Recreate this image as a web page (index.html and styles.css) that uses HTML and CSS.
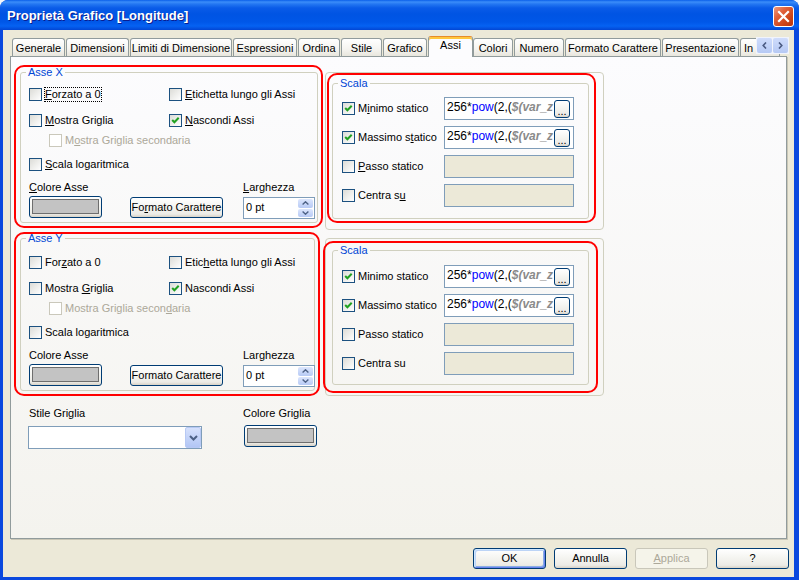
FILE: index.html
```html
<!DOCTYPE html>
<html lang="it">
<head>
<meta charset="utf-8">
<title>Proprietà Grafico [Longitude]</title>
<link rel="stylesheet" href="styles.css">
</head>
<body>
<div class="window">
  <div class="titlebar">
    <span class="title">Proprietà Grafico [Longitude]</span>
    <button class="close" aria-label="Chiudi"><svg width="13" height="13" viewBox="0 0 13 13"><path d="M2 2 L11 11 M11 2 L2 11" fill="none" stroke="#fff" stroke-width="2.2" stroke-linecap="square"/></svg></button>
  </div>
  <div class="frame">
    <div class="tabstrip">
      <div class="tab t1">Generale</div>
      <div class="tab t2">Dimensioni</div>
      <div class="tab t3">Limiti di Dimensione</div>
      <div class="tab t4">Espressioni</div>
      <div class="tab t5">Ordina</div>
      <div class="tab t6">Stile</div>
      <div class="tab t7">Grafico</div>
      <div class="tab sel t8">Assi</div>
      <div class="tab t9">Colori</div>
      <div class="tab t10">Numero</div>
      <div class="tab t11">Formato Carattere</div>
      <div class="tab t12">Presentazione</div>
      <div class="tab t13">In</div>
      <div class="tabscroll">
        <span class="sc"><svg width="5" height="7" viewBox="0 0 5 7"><path d="M4 0.5 L1.2 3.5 L4 6.5" fill="none" stroke="#4A5A82" stroke-width="1.6"/></svg></span>
        <span class="sc"><svg width="5" height="7" viewBox="0 0 5 7"><path d="M1 0.5 L3.8 3.5 L1 6.5" fill="none" stroke="#4A5A82" stroke-width="1.6"/></svg></span>
      </div>
    </div>

    <div class="panel">
      <div class="row row-a">
        <div class="mark mark-x">
          <fieldset class="group">
            <legend>Asse X</legend>
            <div class="axis">
              <div class="cbrow">
                <div class="chk"><span class="box"></span><span class="lbl focus"><u>F</u>orzato a 0</span></div>
                <div class="chk"><span class="box"></span><span class="lbl"><u>E</u>tichetta lungo gli Assi</span></div>
              </div>
              <div class="cbrow r2">
                <div class="chk"><span class="box"></span><span class="lbl"><u>M</u>ostra Griglia</span></div>
                <div class="chk"><span class="box"><svg width="11" height="11" viewBox="0 0 11 11"><path d="M2.2 5 L4.4 7.3 L8.7 2.8" fill="none" stroke="#21A121" stroke-width="2"/></svg></span><span class="lbl"><u>N</u>ascondi Assi</span></div>
              </div>
              <div class="cbrow r3">
                <div class="chk dis"><span class="box"></span><span class="lbl">M<u>o</u>stra Griglia secondaria</span></div>
              </div>
              <div class="cbrow r4">
                <div class="chk"><span class="box"></span><span class="lbl"><u>S</u>cala logaritmica</span></div>
              </div>
              <div class="ctrl">
                <span class="lab"><u>C</u>olore Asse</span>
                <span class="lab larg"><u>L</u>arghezza</span>
                <button class="btn colbtn"><span class="swatch"></span></button>
                <button class="btn fmt">Fo<u>r</u>mato Carattere</button>
                <div class="spin">
                  <span class="val">0 pt</span>
                  <span class="updown">
                    <span class="ud"><svg width="7" height="4" viewBox="0 0 7 4"><path d="M0.6 3.5 L3.5 0.8 L6.4 3.5" fill="none" stroke="#4D6185" stroke-width="1.4"/></svg></span>
                    <span class="ud"><svg width="7" height="4" viewBox="0 0 7 4"><path d="M0.6 0.5 L3.5 3.2 L6.4 0.5" fill="none" stroke="#4D6185" stroke-width="1.4"/></svg></span>
                  </span>
                </div>
              </div>
            </div>
          </fieldset>
        </div>

        <div class="outer outer-a">
          <div class="mark mark-sx">
            <fieldset class="group">
              <legend>Scala</legend>
              <div class="scala-in">
                <div class="srow">
                  <div class="chk"><span class="box"><svg width="11" height="11" viewBox="0 0 11 11"><path d="M2.2 5 L4.4 7.3 L8.7 2.8" fill="none" stroke="#21A121" stroke-width="2"/></svg></span><span class="lbl">M<u>i</u>nimo statico</span></div>
                  <div class="tb"><span class="expr">256*<span class="kw">pow</span>(2,(<span class="var">$(var_z</span></span><button class="btn dots">...</button></div>
                </div>
                <div class="srow">
                  <div class="chk"><span class="box"><svg width="11" height="11" viewBox="0 0 11 11"><path d="M2.2 5 L4.4 7.3 L8.7 2.8" fill="none" stroke="#21A121" stroke-width="2"/></svg></span><span class="lbl">Massimo s<u>t</u>atico</span></div>
                  <div class="tb"><span class="expr">256*<span class="kw">pow</span>(2,(<span class="var">$(var_z</span></span><button class="btn dots">...</button></div>
                </div>
                <div class="srow">
                  <div class="chk"><span class="box"></span><span class="lbl"><u>P</u>asso statico</span></div>
                  <div class="tb dis"></div>
                </div>
                <div class="srow">
                  <div class="chk"><span class="box"></span><span class="lbl">Centra s<u>u</u></span></div>
                  <div class="tb dis"></div>
                </div>
              </div>
            </fieldset>
          </div>
        </div>
      </div>

      <div class="row row-b">
        <div class="mark mark-y">
          <fieldset class="group">
            <legend>Asse Y</legend>
            <div class="axis">
              <div class="cbrow">
                <div class="chk"><span class="box"></span><span class="lbl">For<u>z</u>ato a 0</span></div>
                <div class="chk"><span class="box"></span><span class="lbl">Etic<u>h</u>etta lungo gli Assi</span></div>
              </div>
              <div class="cbrow r2">
                <div class="chk"><span class="box"></span><span class="lbl">Mostra <u>G</u>riglia</span></div>
                <div class="chk"><span class="box"><svg width="11" height="11" viewBox="0 0 11 11"><path d="M2.2 5 L4.4 7.3 L8.7 2.8" fill="none" stroke="#21A121" stroke-width="2"/></svg></span><span class="lbl">Nascondi Assi</span></div>
              </div>
              <div class="cbrow r3">
                <div class="chk dis"><span class="box"></span><span class="lbl">Mostra Griglia secon<u>d</u>aria</span></div>
              </div>
              <div class="cbrow r4">
                <div class="chk"><span class="box"></span><span class="lbl">Scala logaritmica</span></div>
              </div>
              <div class="ctrl">
                <span class="lab">Colore Asse</span>
                <span class="lab larg">Larghezza</span>
                <button class="btn colbtn"><span class="swatch"></span></button>
                <button class="btn fmt">Formato Carattere</button>
                <div class="spin">
                  <span class="val">0 pt</span>
                  <span class="updown">
                    <span class="ud"><svg width="7" height="4" viewBox="0 0 7 4"><path d="M0.6 3.5 L3.5 0.8 L6.4 3.5" fill="none" stroke="#4D6185" stroke-width="1.4"/></svg></span>
                    <span class="ud"><svg width="7" height="4" viewBox="0 0 7 4"><path d="M0.6 0.5 L3.5 3.2 L6.4 0.5" fill="none" stroke="#4D6185" stroke-width="1.4"/></svg></span>
                  </span>
                </div>
              </div>
            </div>
          </fieldset>
        </div>

        <div class="outer outer-b">
          <div class="mark mark-sy">
            <fieldset class="group">
              <legend>Scala</legend>
              <div class="scala-in">
                <div class="srow">
                  <div class="chk"><span class="box"><svg width="11" height="11" viewBox="0 0 11 11"><path d="M2.2 5 L4.4 7.3 L8.7 2.8" fill="none" stroke="#21A121" stroke-width="2"/></svg></span><span class="lbl">Minimo statico</span></div>
                  <div class="tb"><span class="expr">256*<span class="kw">pow</span>(2,(<span class="var">$(var_z</span></span><button class="btn dots">...</button></div>
                </div>
                <div class="srow">
                  <div class="chk"><span class="box"><svg width="11" height="11" viewBox="0 0 11 11"><path d="M2.2 5 L4.4 7.3 L8.7 2.8" fill="none" stroke="#21A121" stroke-width="2"/></svg></span><span class="lbl">Massimo statico</span></div>
                  <div class="tb"><span class="expr">256*<span class="kw">pow</span>(2,(<span class="var">$(var_z</span></span><button class="btn dots">...</button></div>
                </div>
                <div class="srow">
                  <div class="chk"><span class="box"></span><span class="lbl">Passo statico</span></div>
                  <div class="tb dis"></div>
                </div>
                <div class="srow">
                  <div class="chk"><span class="box"></span><span class="lbl">Centra su</span></div>
                  <div class="tb dis"></div>
                </div>
              </div>
            </fieldset>
          </div>
        </div>
      </div>

      <div class="row-c">
        <span class="lab">Stile Griglia</span>
        <span class="lab">Colore Griglia</span>
        <div class="combo"><span class="dd"><svg width="9" height="6" viewBox="0 0 9 6"><path d="M1 1 L4.5 4.5 L8 1" fill="none" stroke="#4D6185" stroke-width="2"/></svg></span></div>
        <button class="btn colbtn cg"><span class="swatch"></span></button>
      </div>
    </div>

    <div class="dlg-btns">
      <button class="btn dlg def">OK</button>
      <button class="btn dlg">Annulla</button>
      <button class="btn dlg dis"><u>A</u>pplica</button>
      <button class="btn dlg">?</button>
    </div>
  </div>
</div>
</body>
</html>
```
FILE: styles.css
```css
* { box-sizing: border-box; }
html, body { margin: 0; padding: 0; }
body {
  width: 799px; height: 580px; overflow: hidden;
  background: #F4F6FB;
  font-family: "Liberation Sans", Arial, sans-serif;
  font-size: 11px; color: #000;
}
button { font: inherit; color: inherit; margin: 0; padding: 0; cursor: default; }
u { text-decoration: underline; text-underline-offset: 1px; }

.window {
  width: 799px; height: 580px;
  display: flex; flex-direction: column;
  background: #0A48DE;
  border-radius: 8px 8px 0 0;
  overflow: hidden;
}

/* title bar */
.titlebar {
  flex: none; height: 30px;
  display: flex; align-items: flex-start; justify-content: space-between;
  padding: 0 5px 0 7px;
  background: linear-gradient(180deg, #0A5FEA 0px, #3B8DF9 2px, #2477F2 4px, #0A5BE8 8px, #0054E3 14px, #0057E8 22px, #0562F2 26px, #0246D4 30px);
}
.title {
  margin-top: 8px;
  font-weight: bold; font-size: 13px; line-height: 15px;
  color: #fff; text-shadow: 1px 1px 0 #0A1D8F;
  white-space: nowrap;
}
.close {
  margin-top: 6px;
  width: 21px; height: 21px;
  border: 1px solid #fff; border-radius: 3px;
  background: linear-gradient(135deg, #EE9A7E 0%, #E0603A 35%, #CC4418 70%, #B8350C 100%);
  display: flex; align-items: center; justify-content: center;
}

/* frame */
.frame {
  flex: 1; min-height: 0;
  margin: 0 5px 3px 3px;
  background: #ECE9D8;
  padding: 6px 7px 0 7px;
  display: flex; flex-direction: column;
}

/* tabs */
.tabstrip {
  position: relative; flex: none;
  height: 20px; margin-left: 2px;
  display: flex; align-items: flex-end; gap: 1px;
}
.tab {
  flex: none; height: 18px;
  border: 1px solid #919B9C; border-bottom: 0;
  border-radius: 3px 3px 0 0;
  background: linear-gradient(#FFFFFF, #F5F4F0 60%, #E8E6DD);
  text-align: center; white-space: nowrap; overflow: hidden;
  padding-top: 3px; line-height: 13px;
}
.tab.sel {
  height: 21px; margin-bottom: -1px; margin-right: -1px;
  position: relative; z-index: 1;
  background: #FCFCFE;
  border-top: 1px solid #E68B2C;
  box-shadow: inset 0 2px 0 #FFC73C;
  padding-top: 2px;
}
.t1 { width: 53px; } .t2 { width: 63px; } .t3 { width: 102px; } .t4 { width: 64px; }
.t5 { width: 42px; } .t6 { width: 41px; } .t7 { width: 44px; } .t8 { width: 45px; }
.t9 { width: 40px; } .t10 { width: 50px; } .t11 { width: 96px; } .t12 { width: 77px; }
.t13 { width: 40px; text-align: left; padding-left: 3px; }

.tabscroll {
  position: absolute; right: -2px; top: 1px; z-index: 2;
  width: 33px; height: 17px;
  display: flex; gap: 1px; padding: 1px;
  background: #F1F4FC;
}
.sc {
  flex: 1; border-radius: 2px;
  background: linear-gradient(#CFDCFC, #B6C9F4);
  display: flex; align-items: center; justify-content: center;
}

/* panel */
.panel {
  flex: none; height: 483px;
  border: 1px solid #919B9C;
  background: linear-gradient(#FCFCFE, #F4F3EE);
  box-shadow: 1px 1px 0 #C9C6B6;
  padding: 8px 0 0 3px;
}
.row { display: flex; align-items: flex-start; }
.row-b { margin-top: 2px; }

.mark { flex: none; border: 2px solid #FF0000; border-radius: 10px; }
.mark-x { width: 309px; padding: 0 3px 3px 4px; }
.mark-y { width: 306px; padding: 0 3px 3px 4px; }
.mark-y .group { margin-top: -1px; }

fieldset.group {
  margin: 0; padding: 0; min-width: 0;
  border: 1px solid #D0D0BF; border-radius: 3px;
}
.group legend {
  margin-left: 5px; padding: 0 2px;
  line-height: 11px; color: #0046D5;
}

/* axis groups */
.axis { padding: 10px 0 4px 8px; }
.mark-y .axis { padding-top: 12px; }
.cbrow { display: grid; grid-template-columns: 140px auto; height: 13px; }
.cbrow.r2 { margin-top: 13px; }
.cbrow.r3 { margin-top: 7px; padding-left: 20px; grid-template-columns: auto; }
.cbrow.r4 { margin-top: 11px; }

.chk { display: flex; align-items: center; height: 13px; white-space: nowrap; }
.box {
  flex: none; width: 13px; height: 13px;
  border: 1px solid #1C5180;
  background: linear-gradient(135deg, #DCDCD7, #FFFFFF);
  display: flex; align-items: center; justify-content: center;
}
.lbl { margin-left: 3px; line-height: 13px; }
.focus { outline: 1px dotted #000; outline-offset: 0; }
.chk.dis .box { border-color: #CAC8BB; background: #FFFFFF; }
.chk.dis .lbl { color: #ACA899; }

.ctrl {
  display: grid;
  grid-template-columns: 101px 113px 72px;
  grid-template-rows: 13px 22px;
  row-gap: 2px;
  margin-top: 10px;
}
.lab { line-height: 13px; white-space: nowrap; }
.larg { grid-column: 3; }

.btn {
  border: 1px solid #003C74; border-radius: 3px;
  background: linear-gradient(#FFFFFF, #F5F5F1 45%, #ECEBE6 85%, #D8D2C6);
  text-align: center; white-space: nowrap;
}
.fmt { width: 93px; height: 21px; margin-top: 1px; line-height: 19px; }
.colbtn { width: 73px; height: 22px; padding: 2px 2px 3px 2px; display: block; }
.swatch { display: block; height: 100%; border: 1px solid #6E6E6E; background: #C3C3C3; }

.spin {
  width: 72px; height: 22px; margin-top: 1px;
  border: 1px solid #7F9DB9; background: #fff;
  display: flex;
}
.spin .val { flex: 1; padding: 3px 0 0 2px; line-height: 13px; }
.updown { flex: none; width: 16px; display: flex; flex-direction: column; gap: 1px; padding: 1px 1px 1px 0; }
.ud {
  flex: 1; border-radius: 2px;
  background: linear-gradient(#DCE6FD, #B7CAF5);
  display: flex; align-items: center; justify-content: center;
}

/* scala */
.outer {
  flex: none; width: 279px; height: 158px;
  border: 1px solid #D0D0BF; border-radius: 4px;
}
.outer-a { margin: 7px 0 0 2px; }
.outer-b { margin: 6px 0 0 5px; }
.mark-sx { width: 269px; margin-left: 1px; padding: 3px 5px 2px 3px; }
.mark-sy { width: 275px; margin: 2px 0 0 -3px; padding: 2px 7px 6px 7px; }
.scala-in { display: flex; flex-direction: column; gap: 6px; padding: 8px 14px 11px 9px; }
.mark-sy .scala-in { padding: 9px 14px 9px 9px; }
.srow { display: flex; align-items: center; height: 23px; }
.srow .chk { width: 102px; flex: none; }
.tb {
  flex: none; width: 130px; height: 23px;
  border: 1px solid #7F9DB9; background: #fff;
  display: flex; align-items: flex-start;
  padding: 2px 3px 0 2px;
}
.tb.dis { background: #ECE9D8; }
.expr { flex: 1; min-width: 0; overflow: hidden; white-space: nowrap; font-size: 12px; line-height: 14px; }
.kw { color: #0000FF; }
.var { color: #8A8A8A; font-weight: bold; font-style: italic; }
.dots { flex: none; width: 16px; height: 18px; font-size: 11px; line-height: 11px; padding-top: 4px; }

/* bottom row */
.row-c {
  margin-top: 11px; padding-left: 15px;
  display: grid;
  grid-template-columns: 214px auto;
  grid-template-rows: 13px auto;
  row-gap: 6px;
}
.combo {
  margin-left: -1px; width: 174px; height: 23px;
  border: 1px solid #7F9DB9; background: #fff;
  display: flex; justify-content: flex-end;
}
.dd {
  width: 16px; height: 100%;
  border: 1px solid #B7C9F4; border-radius: 2px;
  background: linear-gradient(#D6E1FC, #B2C6F5);
  display: flex; align-items: center; justify-content: center;
}
.colbtn.cg { margin: -1px 0 0 1px; }

/* dialog buttons */
.dlg-btns {
  flex: none;
  display: flex; justify-content: flex-end; gap: 8px;
  margin: 9px -2px 0 0;
}
.dlg { width: 73px; height: 21px; line-height: 19px; }
.dlg.def {
  box-shadow: inset 1px 1px 0 #CEE7FF, inset -1px -1px 0 #6982EE, inset 2px 2px 0 #BCD4F6, inset -2px -2px 0 #89ADE4;
}
.dlg.dis { border-color: #C9C7BA; color: #ACA899; background: #F5F4EA; }
```
